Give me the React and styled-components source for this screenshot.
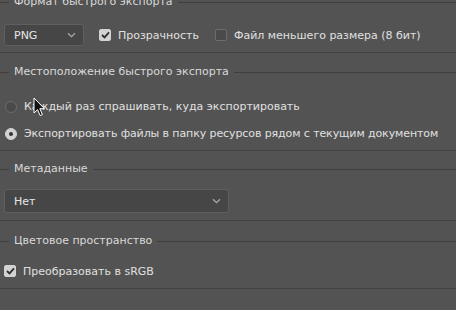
import React, { useState } from "react";
import styled, { createGlobalStyle } from "styled-components";

const GlobalStyle = createGlobalStyle`
  html, body {
    margin: 0;
    padding: 0;
    background: #535353;
    overflow: hidden;
  }
  body {
    font-family: "DejaVu Sans", "Liberation Sans", sans-serif;
    font-size: 11px;
    color: #e0e0e0;
  }
`;

const Page = styled.div`
  position: relative;
  width: 456px;
  height: 310px;
  overflow: hidden;
  background: #535353;
`;

const Group = styled.section`
  margin-top: ${(p) => p.$gap}px;
  border-bottom: 1px solid #424242;
  padding: ${(p) => p.$pt}px 0 ${(p) => p.$pb}px 4px;
`;

const Header = styled.div`
  display: flex;
  align-items: center;
  height: 14px;
  margin-left: -4px;
  margin-bottom: ${(p) => p.$after}px;

  &::before,
  &::after {
    content: "";
    height: 1px;
    background: #3f3f3f;
  }
  &::before {
    width: 9px;
  }
  &::after {
    flex: 1;
  }
`;

const Legend = styled.span`
  padding: 0 5px;
  color: #d9d9d9;
  white-space: nowrap;
  line-height: 14px;
`;

const Row = styled.div`
  display: flex;
  align-items: center;
  height: ${(p) => p.$h || 22}px;
`;

const SelectBox = styled.div`
  box-sizing: border-box;
  display: flex;
  align-items: center;
  justify-content: space-between;
  width: ${(p) => p.$w}px;
  height: ${(p) => p.$h}px;
  padding: 0 7px 0 9px;
  background: #464646;
  border: 1px solid #5f5f5f;
  border-radius: 3px;
  color: #e6e6e6;
`;

const Check = styled.span`
  box-sizing: border-box;
  display: inline-flex;
  align-items: center;
  justify-content: center;
  width: 12px;
  height: 12px;
  border-radius: 2px;
  background: ${(p) => (p.$on ? "#d2d2d2" : "#4a4a4a")};
  border: 1px solid ${(p) => (p.$on ? "#d2d2d2" : "#6c6c6c")};
  flex-shrink: 0;
`;

const Radio = styled.span`
  box-sizing: border-box;
  display: inline-flex;
  align-items: center;
  justify-content: center;
  width: 12px;
  height: 12px;
  border-radius: 50%;
  background: ${(p) => (p.$on ? "#d2d2d2" : "#4a4a4a")};
  border: 1px solid ${(p) => (p.$on ? "#d2d2d2" : "#6c6c6c")};
  flex-shrink: 0;

  &::after {
    content: "";
    display: ${(p) => (p.$on ? "block" : "none")};
    width: 4px;
    height: 4px;
    border-radius: 50%;
    background: #333;
  }
`;

const Option = styled.label`
  display: inline-flex;
  align-items: center;
  gap: ${(p) => p.$gap || 7}px;
  margin-left: ${(p) => p.$ml || 0}px;
  height: 18px;
  white-space: nowrap;
  letter-spacing: ${(p) => p.$ls || 0}px;
  cursor: default;
`;

const Cursor = styled.svg`
  position: absolute;
  left: 33px;
  top: 97px;
  pointer-events: none;
`;

const Chevron = () => (
  <svg width="9" height="6" viewBox="0 0 9 6">
    <path d="M1 1.2 L4.5 4.6 L8 1.2" fill="none" stroke="#a8a8a8" strokeWidth="1.3" />
  </svg>
);

const Tick = () => (
  <svg width="9" height="8" viewBox="0 0 9 8">
    <path d="M1 4 L3.5 6.4 L8 1.4" fill="none" stroke="#2e2e2e" strokeWidth="1.8" />
  </svg>
);

const CheckOption = ({ on, children, ml, gap }) => (
  <Option $ml={ml} $gap={gap}>
    <Check $on={on}>{on && <Tick />}</Check>
    {children}
  </Option>
);

export default function App() {
  const [where, setWhere] = useState("folder");

  return (
    <Page>
      <GlobalStyle />

      <Group $gap={-5} $pt={0} $pb={6}>
        <Header $after={15}>
          <Legend>Формат быстрого экспорта</Legend>
        </Header>
        <Row $h={22}>
          <SelectBox $w={80} $h={22}>
            PNG
            <Chevron />
          </SelectBox>
          <CheckOption on ml={15}>Прозрачность</CheckOption>
          <CheckOption ml={16}>Файл меньшего размера (8 бит)</CheckOption>
        </Row>
      </Group>

      <Group $gap={12} $pt={0} $pb={3}>
        <Header $after={14}>
          <Legend>Местоположение быстрого экспорта</Legend>
        </Header>
        <Row $h={27}>
          <Option $ml={1} onClick={() => setWhere("ask")}>
            <Radio $on={where === "ask"} />
            Каждый раз спрашивать, куда экспортировать
          </Option>
        </Row>
        <Row $h={27}>
          <Option $ml={1} $ls={-0.1} onClick={() => setWhere("folder")}>
            <Radio $on={where === "folder"} />
            Экспортировать файлы в папку ресурсов рядом с текущим документом
          </Option>
        </Row>
      </Group>

      <Group $gap={11} $pt={0} $pb={7}>
        <Header $after={13}>
          <Legend>Метаданные</Legend>
        </Header>
        <Row $h={24}>
          <SelectBox $w={225} $h={24}>
            Нет
            <Chevron />
          </SelectBox>
        </Row>
      </Group>

      <Group $gap={13} $pt={0} $pb={8}>
        <Header $after={14}>
          <Legend>Цветовое пространство</Legend>
        </Header>
        <Row $h={18}>
          <CheckOption on gap={7}>Преобразовать в sRGB</CheckOption>
        </Row>
      </Group>

      <Cursor width="13" height="21" viewBox="0 0 13 21">
        <path
          d="M1 1 L1 16 L4.5 12.6 L7.2 18.6 L9.4 17.6 L6.8 11.7 L11.4 11.7 Z"
          fill="#111"
          stroke="#fff"
          strokeWidth="1"
          strokeLinejoin="round"
        />
      </Cursor>
    </Page>
  );
}
